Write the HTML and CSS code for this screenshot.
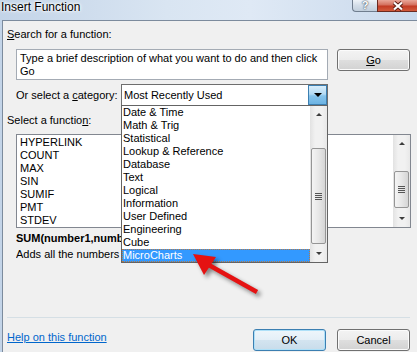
FILE: index.html
```html
<!DOCTYPE html>
<html lang="en">
<head>
    <meta charset="UTF-8">
    <title>Insert Function</title>
    <link rel="stylesheet" href="styles.css">
</head>
<body>
    <div class="window">
        <div class="titlebar">
            <span class="title">Insert Function</span>
            <div class="caption-buttons">
                <span class="cap help">?</span>
                <span class="cap close">
                    <svg width="14" height="10" viewBox="0 0 14 10">
                        <path d="M3 1.5 L11 8.5 M11 1.5 L3 8.5" stroke="#5a1d14" stroke-width="4" fill="none"/>
                        <path d="M3 1.5 L11 8.5 M11 1.5 L3 8.5" stroke="#fff" stroke-width="2.2" fill="none"/>
                    </svg>
                </span>
            </div>
        </div>

        <div class="dialog">
            <div class="label"><u>S</u>earch for a function:</div>
            <div class="search-row">
                <div class="search-box">Type a brief description of what you want to do and then click<br>Go</div>
                <button class="btn go"><u>G</u>o</button>
            </div>

            <div class="category-row">
                <span class="cat-label">Or select a <u>c</u>ategory:</span>
                <div class="combo">
                    <span>Most Recently Used</span>
                    <span class="combo-btn"><i class="tri-down"></i></span>
                </div>
            </div>

            <div class="label fn-label">Select a functio<u>n</u>:</div>
            <div class="listbox">
                <ul class="items">
                    <li>HYPERLINK</li>
                    <li>COUNT</li>
                    <li>MAX</li>
                    <li>SIN</li>
                    <li>SUMIF</li>
                    <li>PMT</li>
                    <li>STDEV</li>
                </ul>
                <div class="scrollbar">
                    <span class="sb-arrow"><i class="tri-up"></i></span>
                    <div class="sb-track">
                        <div class="sb-thumb list-thumb"><i class="grip"></i></div>
                    </div>
                    <span class="sb-arrow"><i class="tri-down small"></i></span>
                </div>
            </div>

            <!-- the open list hides the rest of these two lines -->
            <div class="syntax">SUM(number1,number2,...)</div>
            <div class="desc">Adds all the numbers in a range of cells.</div>

            <div class="separator"></div>

            <div class="footer">
                <a class="help-link" href="#">Help on this function</a>
                <div class="buttons">
                    <button class="btn ok">OK</button>
                    <button class="btn">Cancel</button>
                </div>
            </div>
        </div>

        <!-- open category list, drawn over the dialog -->
        <div class="dropdown">
            <ul class="items">
                <li>Date &amp; Time</li>
                <li>Math &amp; Trig</li>
                <li>Statistical</li>
                <li>Lookup &amp; Reference</li>
                <li>Database</li>
                <li>Text</li>
                <li>Logical</li>
                <li>Information</li>
                <li>User Defined</li>
                <li>Engineering</li>
                <li>Cube</li>
                <li class="selected">MicroCharts</li>
            </ul>
            <div class="scrollbar">
                <span class="sb-arrow"><i class="tri-up"></i></span>
                <div class="sb-track">
                    <div class="sb-thumb drop-thumb"><i class="grip"></i></div>
                </div>
                <span class="sb-arrow"><i class="tri-down small"></i></span>
            </div>
        </div>

        <svg class="arrow" width="417" height="352" viewBox="0 0 417 352">
            <line x1="207" y1="264" x2="257" y2="292" stroke="#e51212" stroke-width="4.5"/>
            <polygon points="193,254 216,257 204,275" fill="#e51212"/>
        </svg>
    </div>
</body>
</html>
```

FILE: styles.css
```css
body {
    margin: 0;
    font-family: "Liberation Sans", Arial, sans-serif;
    font-size: 11px;
    color: #000;
    background: #f0f0f0;
    overflow: hidden;
}
ul {
    list-style: none;
    margin: 0;
    padding: 0;
}
.window {
    position: relative;
    width: 417px;
    height: 352px;
    overflow: hidden;
    background: linear-gradient(to right, #c3d4e8, #d9e5f2 40%, #dfe9f5 60%, #c9d9ec);
}
.titlebar {
    height: 20px;
    display: flex;
    justify-content: space-between;
    align-items: flex-start;
}
.title {
    font-size: 12px;
    line-height: 15px;
    padding-left: 1px;
    text-shadow: 0 0 5px #fff, 0 0 3px #fff, 0 0 2px #fff;
}
.caption-buttons {
    display: flex;
}
.cap {
    height: 12px;
    box-sizing: border-box;
    display: flex;
    align-items: center;
    justify-content: center;
}
.help {
    width: 25px;
    border: 1px solid #6f7d8e;
    border-top: none;
    border-right: none;
    border-radius: 0 0 0 4px;
    background: linear-gradient(#eef3f8, #d3dde8 50%, #c2cfdd);
    color: #fff;
    font-weight: bold;
    font-size: 11px;
    line-height: 11px;
    text-shadow: 0 0 1px #3d4a5a, 0 0 2px #3d4a5a;
}
.close {
    width: 40px;
    border: 1px solid #6b2a20;
    border-top: none;
    border-right: none;
    background: linear-gradient(#e9a799, #d4705e 45%, #c23b24 55%, #d25a3c);
}
.dialog {
    height: 331px;
    margin-left: 2px;
    padding: 0 7px 0 4px;
    border-left: 1px solid #7c8b9d;
    border-top: 1px solid #7c8b9d;
    background: #f0f0f0;
}
.label {
    margin-top: 7px;
    line-height: 13px;
}
.search-row {
    display: flex;
    align-items: flex-start;
    margin-top: 8px;
}
.search-box {
    width: 312px;
    height: 31px;
    box-sizing: border-box;
    margin-left: 9px;
    padding: 2px 3px;
    border: 1px solid #a4abb4;
    background: #fff;
    line-height: 13px;
}
.btn {
    width: 73px;
    height: 22px;
    box-sizing: border-box;
    padding: 0;
    border: 1px solid #707070;
    border-radius: 3px;
    background: linear-gradient(#f3f3f3, #ececec 48%, #dedede 52%, #d2d2d2);
    box-shadow: inset 0 0 0 1px #fbfbfb;
    font: inherit;
    color: #000;
}
.go {
    margin-left: 9px;
}
.ok {
    border-color: #3c7fb1;
    box-shadow: inset 0 0 0 1px #aee0f8;
    background: linear-gradient(#eef6fb, #e4eff7 48%, #d3e4f0 52%, #c8dcea);
}
.category-row {
    display: flex;
    align-items: center;
    margin-top: 4px;
}
.cat-label {
    width: 105px;
    margin-left: 9px;
}
.combo {
    width: 207px;
    height: 22px;
    box-sizing: border-box;
    display: flex;
    align-items: center;
    padding-left: 2px;
    border: 1px solid #6e6e6e;
    background: #fff;
}
.combo-btn {
    align-self: stretch;
    width: 17px;
    margin: 0 0 0 auto;
    border: 1px solid #3c7fb1;
    background: linear-gradient(#d9eefb, #b3daf3 45%, #86c4ec 55%, #6cb3e3);
    display: flex;
    align-items: center;
    justify-content: center;
}
.tri-down {
    width: 0;
    height: 0;
    border-left: 4px solid transparent;
    border-right: 4px solid transparent;
    border-top: 4px solid #000;
}
.tri-down.small {
    border-top-color: #3c3c3c;
    border-left-width: 3px;
    border-right-width: 3px;
    border-top-width: 3px;
}
.tri-up {
    width: 0;
    height: 0;
    border-left: 3px solid transparent;
    border-right: 3px solid transparent;
    border-bottom: 3px solid #3c3c3c;
}
.fn-label {
    margin-top: 8px;
}
.listbox {
    width: 395px;
    height: 94px;
    box-sizing: border-box;
    margin: 7px 0 0 9px;
    border: 1px solid #828790;
    background: #fff;
    display: flex;
}
.listbox .items {
    flex: 1;
    padding: 1px 3px;
    line-height: 13px;
}
.scrollbar {
    width: 17px;
    display: flex;
    flex-direction: column;
    background: linear-gradient(to right, #e2e2e2, #f1f1f1 30%, #f1f1f1 70%, #e8e8e8);
}
.sb-arrow {
    height: 17px;
    flex: none;
    display: flex;
    align-items: center;
    justify-content: center;
}
.sb-track {
    flex: 1;
    padding: 0 1px;
}
.sb-thumb {
    box-sizing: border-box;
    border: 1px solid #959595;
    border-radius: 2px;
    background: linear-gradient(to right, #f4f4f4, #e7e7e7 50%, #d5d5d5);
    display: flex;
    align-items: center;
    justify-content: center;
}
.list-thumb {
    margin-top: 19px;
    height: 37px;
}
.drop-thumb {
    margin-top: 25px;
    height: 96px;
}
.grip {
    width: 7px;
    height: 7px;
    background: repeating-linear-gradient(#555 0 1px, transparent 1px 2px);
}
.syntax,
.desc {
    width: 105px;
    margin-left: 9px;
    line-height: 13px;
    white-space: nowrap;
    overflow: hidden;
}
.syntax {
    margin-top: 4px;
    font-weight: bold;
}
.desc {
    margin-top: 3px;
}
.separator {
    height: 1px;
    margin-top: 56px;
    background: #d5dfe5;
}
.footer {
    display: flex;
    margin-top: 11px;
}
.help-link {
    margin-top: 2px;
    line-height: 13px;
    color: #0066cc;
}
.buttons {
    display: flex;
    gap: 11px;
    margin-left: auto;
}
.dropdown {
    position: absolute;
    left: 121px;
    top: 105px;
    width: 207px;
    height: 158px;
    box-sizing: border-box;
    border: 1px solid #646464;
    background: #fff;
    display: flex;
}
.dropdown .items {
    flex: 1;
    line-height: 13px;
    overflow: hidden;
}
.dropdown li {
    padding-left: 1px;
}
.dropdown li.selected {
    background: #3399ff;
    color: #fff;
    line-height: 11px;
    padding-left: 0;
    border: 1px dotted #b77a45;
}
.arrow {
    position: absolute;
    left: 0;
    top: 0;
    pointer-events: none;
    filter: drop-shadow(3px 3px 2px rgba(0, 0, 0, 0.45));
}
```
